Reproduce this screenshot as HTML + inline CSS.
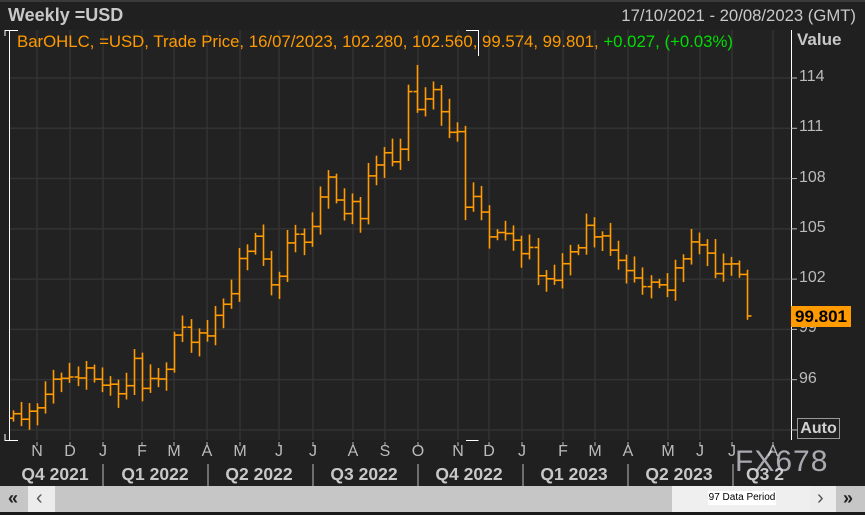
<!DOCTYPE html>
<html><head><meta charset="utf-8"><style>
html,body{margin:0;padding:0;background:#1e1e1e;width:865px;height:515px;overflow:hidden;font-family:"Liberation Sans",sans-serif}
.t{position:absolute;white-space:nowrap}
</style></head><body>
<div style="position:absolute;left:0;top:0;width:865px;height:515px;background:#202020"></div>
<div style="position:absolute;left:0;top:0;width:865px;height:2px;background:#3a3a3a"></div>
<div class="t" style="left:8px;top:5px;font-size:18px;font-weight:bold;color:#c8c8c8">Weekly =USD</div>
<div class="t" style="right:9px;top:6px;font-size:16.7px;color:#c8c8c8">17/10/2021 - 20/08/2023 (GMT)</div>
<svg id="c" width="865" height="515" style="position:absolute;left:0;top:0">
<rect x="9" y="30" width="782" height="410" fill="#222"/>
<g id="grid" stroke="#333" stroke-width="1.5"></g>
<g id="bars" stroke="#ff9a00" stroke-width="1.6"></g>
<line x1="9.5" y1="30" x2="9.5" y2="440" stroke="#fff" stroke-width="1"/>
<line x1="791.5" y1="30" x2="791.5" y2="440" stroke="#fff" stroke-width="1"/>
<polyline points="5,36 5,30.5 18,30.5" fill="none" stroke="#fff"/>
<polyline points="466,30.5 478.5,30.5 478.5,56" fill="none" stroke="#fff"/>
<polyline points="5,434 5,440.5 18,440.5" fill="none" stroke="#fff"/>
<polyline points="466,440.5 478.5,440.5" fill="none" stroke="#fff"/>
<g id="ax" stroke="#bbb"></g>
<g stroke="#888" stroke-width="1.5">
<line x1="103" y1="464" x2="103" y2="486"/><line x1="208" y1="464" x2="208" y2="486"/><line x1="313" y1="464" x2="313" y2="486"/><line x1="418" y1="464" x2="418" y2="486"/><line x1="523" y1="464" x2="523" y2="486"/><line x1="628" y1="464" x2="628" y2="486"/><line x1="733" y1="464" x2="733" y2="486"/>
</g>
</svg>
<div class="t" style="left:17px;top:32px;font-size:16.8px;color:#ff9a00">BarOHLC, =USD, Trade Price, 16/07/2023, 102.280, 102.560, 99.574, 99.801, <span style="color:#00dd00">+0.027, (+0.03%)</span></div>
<div class="t" style="left:797px;top:30px;font-size:17px;font-weight:bold;color:#c8c8c8">Value</div>
<div id="pl"></div>
<div class="t" style="left:791px;top:306px;width:60px;height:21px;background:#ff9a00;color:#000;font-weight:bold;font-size:17px;line-height:21px;text-align:center">99.801</div>
<div class="t" style="left:797px;top:418px;width:41px;height:19px;border:1px solid #999;color:#d0d0d0;font-weight:bold;font-size:16px;line-height:19px;text-align:center">Auto</div>
<div id="ml"></div>
<div id="ql"></div>
<div class="t" style="left:735px;top:445px;font-size:30px;color:rgba(215,215,225,0.75);letter-spacing:1px">FX678</div>
<div style="position:absolute;left:0;top:486px;width:865px;height:26px;background:#c6c6c6"></div>
<div style="position:absolute;left:28px;top:486px;width:27px;height:26px;background:#ececec"></div>
<div style="position:absolute;left:672px;top:486px;width:138px;height:26px;background:#efefef"></div>
<div style="position:absolute;left:810px;top:486px;width:26px;height:26px;background:#ececec"></div>
<div class="t" style="left:8px;top:488px;font-size:18px;font-weight:bold;color:#222">«</div>
<div class="t" style="left:36px;top:487px;font-size:20px;color:#555">‹</div>
<div class="t" style="left:817px;top:487px;font-size:20px;color:#555">›</div>
<div class="t" style="left:843px;top:488px;font-size:18px;font-weight:bold;color:#222">»</div>
<div class="t" style="left:708px;top:491px;width:68px;height:14px;background:#fff;font-size:10px;line-height:14px;color:#000;text-align:center">97 Data Period</div>
<div style="position:absolute;left:0;top:512px;width:865px;height:3px;background:#1a1a1a"></div>
<script>
var C=[93.97,93.64,94.12,94.32,95.13,96.03,96.08,96.16,96.10,96.70,96.03,95.67,95.73,95.16,95.64,97.27,95.48,96.07,96.04,96.62,98.66,99.13,98.23,98.79,98.61,99.84,100.50,101.13,103.23,103.66,104.56,103.20,101.66,102.17,104.16,104.68,104.20,105.14,106.90,108.09,106.72,105.91,106.63,105.61,108.16,108.81,109.54,109.00,109.75,113.19,112.12,112.75,113.31,111.99,110.76,110.80,106.29,106.93,106.00,104.52,104.78,104.72,104.32,103.52,103.89,102.20,102.02,101.93,102.92,103.63,103.87,105.21,104.52,104.58,103.73,103.12,102.51,102.07,101.55,101.82,101.66,101.34,102.67,103.21,104.22,104.04,103.55,102.33,102.90,102.91,102.28,99.80];
function Y(p){return 78+(114-p)*16.76}
var b="",prev=93.7;
for(var i=0;i<C.length;i++){var o=prev,c=C[i],x=13+i*8.07;
var r1=0.2+((i*37)%10)/14,r2=0.2+((i*53)%10)/14;
var h=Math.max(o,c)+r1,l=Math.min(o,c)-r2;
if(i==C.length-1){o=102.28;h=102.56;l=99.574;c=99.801}
if(i==50){h=114.78}
x=Math.round(x)+0.5;
b+='<line x1="'+x+'" y1="'+Y(h)+'" x2="'+x+'" y2="'+Y(l)+'"/><line x1="'+(x-4)+'" y1="'+Y(o)+'" x2="'+x+'" y2="'+Y(o)+'"/><line x1="'+x+'" y1="'+Y(c)+'" x2="'+(x+4)+'" y2="'+Y(c)+'"/>';
prev=c;}
document.getElementById('bars').innerHTML=b;
var mx=[37,70,103,142,174,207,240,279,313,353,385,418,458,489,522,563,595,628,668,700,732,773];
var mn="NDJFMAMJJASONDJFMAMJJA";
var g="",a="",pl="",ml="";
for(var k=0;k<mx.length;k++){if(mx[k]<791)g+='<line x1="'+mx[k]+'" y1="30" x2="'+mx[k]+'" y2="440"/>';
a+='<line x1="'+mx[k]+'" y1="442" x2="'+mx[k]+'" y2="446"/>';
ml+='<div class="t" style="left:'+(mx[k]-7)+'px;top:443px;width:14px;text-align:center;font-size:16px;color:#bbb">'+mn[k]+'</div>';}
var pr=[114,111,108,105,102,99,96,93];
for(var k=0;k<pr.length;k++){var y=Y(pr[k]);g+='<line x1="9" y1="'+y+'" x2="791" y2="'+y+'"/>';
a+='<line x1="791" y1="'+y+'" x2="797" y2="'+y+'"/>';
if(pr[k]!=93)pl+='<div class="t" style="left:799px;top:'+(y-10)+'px;font-size:16px;color:#bbb">'+pr[k]+'</div>';}
document.getElementById('grid').innerHTML=g;
document.getElementById('ax').innerHTML=a;
document.getElementById('pl').innerHTML=pl;
document.getElementById('ml').innerHTML=ml;
var q=[["Q4 2021",55],["Q1 2022",155],["Q2 2022",259],["Q3 2022",364],["Q4 2022",469],["Q1 2023",574],["Q2 2023",679],["Q3 2",765]],qs="";
for(var k=0;k<q.length;k++)qs+='<div class="t" style="left:'+(q[k][1]-45)+'px;top:464px;width:90px;text-align:center;font-size:17.5px;font-weight:bold;color:#c8c8c8">'+q[k][0]+'</div>';
document.getElementById('ql').innerHTML=qs;
</script>
</body></html>
